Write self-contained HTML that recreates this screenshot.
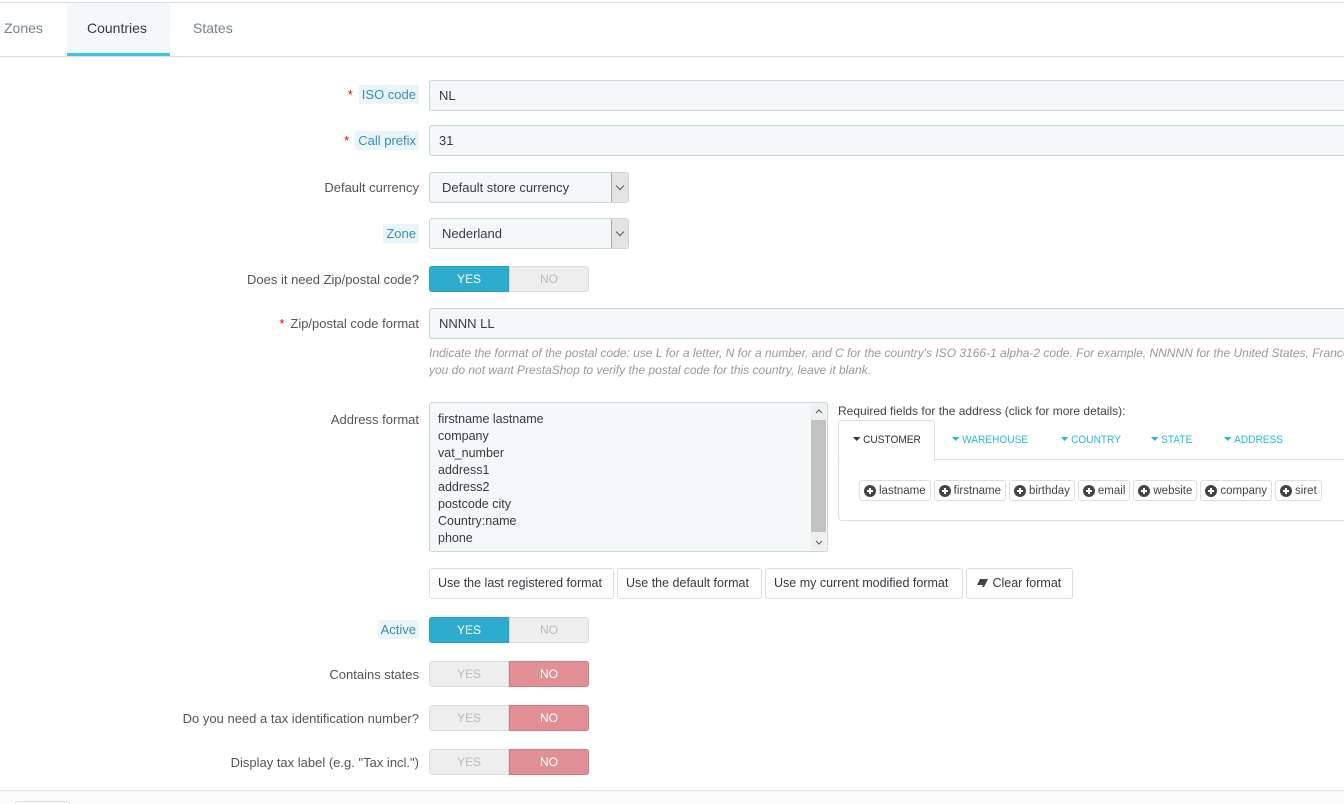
<!DOCTYPE html>
<html><head><meta charset="utf-8"><style>
*{box-sizing:border-box;margin:0;padding:0}
html,body{width:1344px;height:804px;overflow:hidden}
body{background:#fff;font-family:"Liberation Sans",sans-serif;font-size:13px;color:#363a41;position:relative}
.a{position:absolute}
.lbl{position:absolute;right:925px;text-align:right;white-space:nowrap;color:#555}
.hl{background:#eaf5fa;color:#3b8cb2;padding:2px 3px;border-radius:2px}
.req{color:#e00;margin-right:6px}
.inp{position:absolute;left:429px;height:31px;background:#f5f8f9;border:1px solid #c7d6db;border-radius:3px;padding:0 9px;line-height:29px;color:#363a41;overflow:hidden}
.wide{width:920px;border-right:none}
.sel{width:200px;padding-left:12px}
.sel .ar{position:absolute;right:0;top:0;width:17px;height:29px;background:#e4e4e4;border-left:1px solid #aaa;border-radius:0 3px 3px 0}
.sel .ar:after{content:"";position:absolute;left:5px;top:10px;width:5px;height:5px;border-right:1px solid #555;border-bottom:1px solid #555;transform:rotate(45deg)}
.tg{position:absolute;left:429px;width:160px;height:26px;border-radius:3px;overflow:hidden;display:flex;font-size:12px}
.tg span{width:80px;text-align:center;line-height:24px}
.on{background:#2eacce;color:#fff;border:1px solid #2aa0c0}
.off{background:#eee;color:#bbb;border:1px solid #ddd}
.no{background:#e08f95;color:#fff;border:1px solid #cf7a80}
.btn{position:absolute;top:568px;height:31px;border:1px solid #ddd;border-radius:3px;background:#fff;line-height:29px;padding:0 8px;color:#363a41;white-space:nowrap;font-size:12.5px}
.chip{display:inline-flex;align-items:center;height:21px;border:1px solid #ddd;border-radius:3px;padding:0 4px;margin-right:3px;font-size:11.5px;color:#444;background:#fff}
.chip i{display:inline-block;width:12px;height:12px;border-radius:50%;background:#444;margin-right:3px;position:relative}
.chip i:before{content:"";position:absolute;left:3px;top:5px;width:6px;height:2px;background:#fff}
.chip i:after{content:"";position:absolute;left:5px;top:3px;width:2px;height:6px;background:#fff}
.tab{position:absolute;top:434px;font-size:11px;color:#25b9d7;transform:scaleX(.92);transform-origin:left}
.tab:before{content:"";display:inline-block;border-left:4px solid transparent;border-right:4px solid transparent;border-top:4px solid currentColor;margin-right:3px;vertical-align:2px}
</style></head><body>
<div class="a" style="left:0;top:2px;width:1344px;height:1px;background:#ddd"></div>
<div class="a" style="left:0;top:56px;width:1344px;height:1px;background:#ddd"></div>
<div class="a" style="left:67px;top:3px;width:103px;height:53px;background:#f4f8fa;border-bottom:3px solid #3ac5e3"></div>
<div class="a" style="left:4px;top:20px;font-size:14px;color:#6c868e">Zones</div>
<div class="a" style="left:87px;top:20px;font-size:14px;color:#363a41">Countries</div>
<div class="a" style="left:193px;top:20px;font-size:14px;color:#6c868e">States</div>

<div class="lbl" style="top:87px"><span class="req">*</span><span class="hl">ISO code</span></div>
<div class="inp wide" style="top:80px">NL</div>
<div class="lbl" style="top:133px"><span class="req">*</span><span class="hl">Call prefix</span></div>
<div class="inp wide" style="top:125px">31</div>
<div class="lbl" style="top:180px">Default currency</div>
<div class="inp sel" style="top:172px">Default store currency<div class="ar"></div></div>
<div class="lbl" style="top:226px"><span class="hl">Zone</span></div>
<div class="inp sel" style="top:218px">Nederland<div class="ar"></div></div>
<div class="lbl" style="top:272px">Does it need Zip/postal code?</div>
<div class="tg" style="top:266px"><span class="on">YES</span><span class="off">NO</span></div>
<div class="lbl" style="top:316px"><span class="req">*</span>Zip/postal code format</div>
<div class="inp wide" style="top:308px">NNNN LL</div>
<div class="a" style="left:429px;top:345px;width:915px;overflow:hidden;font-size:12px;font-style:italic;color:#999;line-height:17px;white-space:nowrap">Indicate the format of the postal code: use L for a letter, N for a number, and C for the country's ISO 3166-1 alpha-2 code. For example, NNNNN for the United States, France, Poland<br>you do not want PrestaShop to verify the postal code for this country, leave it blank.</div>

<div class="lbl" style="top:412px">Address format</div>
<div class="a" style="left:429px;top:402px;width:399px;height:150px;background:#f5f8f9;border:1px solid #c7d6db;border-radius:3px;padding:8px 8px;line-height:17px;font-size:12.5px">firstname lastname<br>company<br>vat_number<br>address1<br>address2<br>postcode city<br>Country:name<br>phone
<div class="a" style="right:1px;top:1px;width:15px;height:146px;background:#f0f0f0"></div>
<div class="a" style="right:1px;top:17px;width:15px;height:112px;background:#c2c2c2"></div>
<svg class="a" style="right:4px;top:6px" width="8" height="5"><path d="M1 4L4 1 7 4" stroke="#555" fill="none"/></svg>
<svg class="a" style="right:4px;top:137px" width="8" height="5"><path d="M1 1L4 4 7 1" stroke="#555" fill="none"/></svg>
</div>

<div class="a" style="left:838px;top:404px;font-size:12px;color:#444">Required fields for the address (click for more details):</div>
<div class="a" style="left:838px;top:459px;width:510px;height:62px;border:1px solid #ddd;border-radius:4px"></div>
<div class="a" style="left:838px;top:420px;width:97px;height:41px;border:1px solid #ddd;border-bottom:none;background:#fff;border-radius:3px 3px 0 0"></div>
<div class="a" style="left:935px;top:459px;width:420px;height:1px;background:#ddd"></div>
<div class="tab" style="left:853px;color:#333">CUSTOMER</div>
<div class="tab" style="left:952px">WAREHOUSE</div>
<div class="tab" style="left:1061px">COUNTRY</div>
<div class="tab" style="left:1151px">STATE</div>
<div class="tab" style="left:1224px">ADDRESS</div>
<div class="a" style="left:859px;top:480px;white-space:nowrap;display:flex"><span class="chip"><i></i>lastname</span><span class="chip"><i></i>firstname</span><span class="chip"><i></i>birthday</span><span class="chip"><i></i>email</span><span class="chip"><i></i>website</span><span class="chip"><i></i>company</span><span class="chip"><i></i>siret</span></div>

<div class="btn" style="left:429px;width:185px">Use the last registered format</div>
<div class="btn" style="left:617px;width:145px">Use the default format</div>
<div class="btn" style="left:765px;width:198px">Use my current modified format</div>
<div class="btn" style="left:966px;width:107px"><svg width="14" height="10" viewBox="0 0 14 10" style="vertical-align:-1px"><path d="M5 1h8L9 9H1z" fill="#444"/><path d="M2 7h6l-1 2H1z" fill="#fff"/></svg> Clear format</div>

<div class="lbl" style="top:622px"><span class="hl">Active</span></div>
<div class="tg" style="top:617px"><span class="on">YES</span><span class="off">NO</span></div>
<div class="lbl" style="top:667px">Contains states</div>
<div class="tg" style="top:661px"><span class="off">YES</span><span class="no">NO</span></div>
<div class="lbl" style="top:711px">Do you need a tax identification number?</div>
<div class="tg" style="top:705px"><span class="off">YES</span><span class="no">NO</span></div>
<div class="lbl" style="top:755px">Display tax label (e.g. "Tax incl.")</div>
<div class="tg" style="top:749px"><span class="off">YES</span><span class="no">NO</span></div>

<div class="a" style="left:0;top:790px;width:1344px;height:14px;background:#fafbfc;border-top:1px solid #e5e5e5"></div>
<div class="a" style="left:15px;top:801px;width:55px;height:3px;border:1px solid #ddd;border-bottom:none;border-radius:3px 3px 0 0;background:#fff"></div>
</body></html>
